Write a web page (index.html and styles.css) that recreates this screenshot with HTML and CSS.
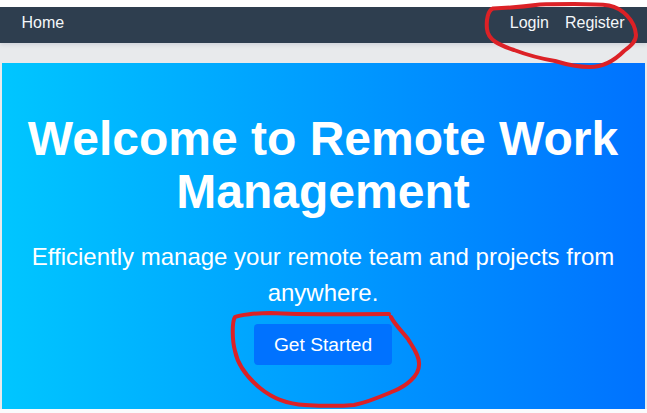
FILE: index.html
```html
<!DOCTYPE html>
<html lang="en">
<head>
  <meta charset="utf-8">
  <title>Remote Work Management</title>
  <link rel="stylesheet" href="styles.css">
</head>
<body>
  <nav class="navbar">
    <a class="nav-link" href="#">Home</a>
    <div class="nav-group">
      <a class="nav-link" href="#">Login</a>
      <a class="nav-link" href="#">Register</a>
    </div>
  </nav>
  <main class="hero">
    <h1 class="hero-title">Welcome to Remote Work Management</h1>
    <p class="hero-text">Efficiently manage your remote team and projects from anywhere.</p>
    <a class="hero-button" href="#">Get Started</a>
  </main>
  <svg class="markup" viewBox="0 0 647 413" aria-hidden="true">
    <path d="M636 35C635 20 622 8 609 5.500C592 3 562 4 540 4.500C525 6.500 507 8 493 8.500C488 10 486 20 487 29C488 40 499 45 514 50C530 56 543 59 555 61C568 65 580 67 590 67C604 67 615 60 624 51C632 45 636 41 636 35Z"/>
    <path d="M389 314C340 314 305 315 271 313C257 313 239 315 235 317C232 321 232 340 235 351C238 366 248 378 260 388C272 398 285 404 305 405C322 406 342 406 354 405C369 402 382 396 394 391C406 386 419 376 419 365C420 356 412 346 408 339C402 331 395 325 391 317"/>
  </svg>
</body>
</html>
```
FILE: styles.css
```css
* {
  box-sizing: border-box;
}

html {
  background: #fafbfc;
}

body {
  margin: 0;
  height: 409px;
  border-top: 7px solid #fff;
  background: #e8eaec;
  font-family: Arial, "Liberation Sans", sans-serif;
}

.navbar {
  display: flex;
  justify-content: space-between;
  height: 36px;
  padding: 7px 22.5px 0 21.5px;
  background: #2e3e4f;
  box-shadow: 0 2px 4px rgba(70, 75, 110, 0.14);
}

.nav-group {
  display: flex;
  gap: 16px;
}

.nav-link {
  color: #f4f7fa;
  font-size: 16px;
  line-height: 18px;
  text-decoration: none;
}

.hero {
  height: 346px;
  margin: 20px 2px 0;
  padding: 50px 21px 0 20px;
  background: linear-gradient(to right, #00c6ff, #0072ff);
  color: #fff;
  text-align: center;
}

.hero-title {
  margin: 0 0 20px;
  font-size: 48px;
  line-height: 52.8px;
}

.hero-text {
  margin: 0 0 13px;
  font-size: 24px;
  line-height: 36px;
}

.hero-button {
  display: block;
  width: 138px;
  height: 41px;
  margin: 0 auto;
  border-radius: 4px;
  background: #0072ff;
  color: #fff;
  font-size: 19.2px;
  line-height: 41px;
  text-decoration: none;
}

.markup {
  position: absolute;
  top: 0;
  left: 0;
  width: 647px;
  height: 413px;
  fill: none;
  stroke: #dc2126;
  stroke-width: 4;
  stroke-linecap: round;
  stroke-linejoin: round;
  pointer-events: none;
}
```
